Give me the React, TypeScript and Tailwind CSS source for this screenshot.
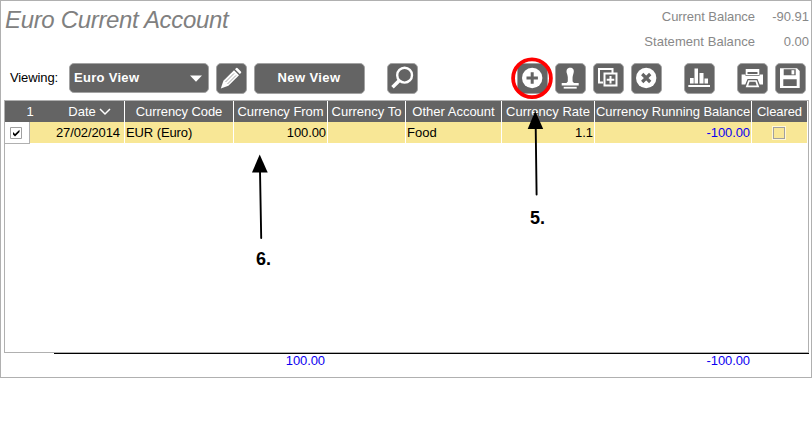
import type { ReactNode } from 'react';

const columns =
  'grid grid-cols-[50px_70px_109px_94px_78px_96px_93px_157px_55px]';

function Tool({ className = '', children }: { className?: string; children: ReactNode }) {
  return (
    <button
      className={`h-[31px] w-[31px] shrink-0 rounded-[5px] border border-[#a3a3a3] bg-[#646464] ${className}`}
    >
      <svg width="29" height="29" viewBox="1 1 29 29" fill="none">
        {children}
      </svg>
    </button>
  );
}

function Head({ children, last = false, className = '' }: { children: ReactNode; last?: boolean; className?: string }) {
  return (
    <div
      className={`flex items-center justify-center whitespace-nowrap ${last ? '' : 'border-r border-white'} ${className}`}
    >
      {children}
    </div>
  );
}

function Toolbar() {
  return (
    <div className="flex h-[31px] items-start">
      <span className="w-[59px] shrink-0 text-[13px] leading-[29px] tracking-[-0.1px] text-black">Viewing:</span>
      <button className="flex h-[30px] w-[140px] shrink-0 items-center justify-between rounded-[5px] border border-[#a3a3a3] bg-[#646464] pr-[6px] pl-1 text-[13px] font-bold tracking-[0.3px] text-white">
        <span>Euro View</span>
        <svg width="12" height="7" viewBox="0 0 12 7">
          <path d="M0 .5h12L6 6.7z" fill="#fff" />
        </svg>
      </button>
      <Tool className="ml-[7px]">
        <path d="M4.8 25.5l2.6-7.8L18 7.2l5 5L12.4 22.8z" fill="#fff" />
        <path d="M19 6.2l1.2-1.1q.7-.6 1.5.1l3.2 3.2q.8.8.1 1.5l-1.2 1.2z" fill="#fff" />
        <path d="M9.5 19l8.6-8.6M11.5 21l8.6-8.6" stroke="#8a8a8a" strokeWidth=".8" />
      </Tool>
      <button className="ml-[7px] h-[31px] w-[111px] shrink-0 rounded-[5px] border border-[#a3a3a3] bg-[#646464] pr-px pb-[2px] text-[13px] font-bold tracking-[0.4px] text-white">
        New View
      </button>
      <Tool className="ml-[22px]">
        <circle cx="17.6" cy="12.2" r="7.4" stroke="#fff" strokeWidth="2.4" />
        <path d="M12.3 17.5l-6.8 6.8" stroke="#fff" strokeWidth="3.6" />
      </Tool>
      <Tool className="ml-[99px]">
        <circle cx="15.2" cy="15" r="10.2" fill="#fff" />
        <path d="M15.2 9.3v11.4M9.5 15h11.4" stroke="#646464" strokeWidth="3" />
      </Tool>
      <Tool className="ml-[7px]">
        <path d="M12.8 18.5c0-3.200.3-4.700-.7-7.500C10.700 7.200 12 4.700 15.200 4.700s4.500 2.500 3.100 6.300c-1 2.800-.7 4.300-.7 7.500l1.400 1.500h4.700v2.500H6.700V20h4.700z" fill="#fff" />
        <path d="M8.700 24.700H21.700" stroke="#fff" strokeWidth="1.800" />
      </Tool>
      <Tool className="ml-[7px]">
        <path d="M10 19.5H6V6h13.5v4" stroke="#fff" strokeWidth="2" />
        <path d="M11.500 10.500H23.500V22.500H11.500z" stroke="#fff" strokeWidth="2" />
        <path d="M17.500 13v7.500M13.700 16.700h7.600" stroke="#fff" strokeWidth="2" />
      </Tool>
      <Tool className="ml-[7px]">
        <circle cx="15.200" cy="15" r="10.200" fill="#fff" />
        <path d="M11.200 11l8 8M19.200 11l-8 8" stroke="#646464" strokeWidth="3.200" />
      </Tool>
      <Tool className="ml-[22px]">
        <path d="M4.300 23H26" stroke="#fff" strokeWidth="2" />
        <path d="M6 15h3.700v5.500H6zM10.500 5.500H14v15h-3.500zM15.500 10h4v10.500h-4zM20.500 15.500H24v5h-3.500z" fill="#fff" />
      </Tool>
      <Tool className="ml-[22px]">
        <path d="M8.700 6h13.600v6H8.700z" fill="#fff" />
        <path d="M10.500 9h10v2h-10z" fill="#646464" />
        <path d="M4.600 11.500h3.800v1.300h14.200v-1.300H26v10h-3.300L20.500 16h-10l-2.200 5.500H4.600z" fill="#fff" />
        <path d="M11.300 17.200h8.400l2.600 7H8.700z" fill="#fff" />
        <path d="M12.500 18.700h6l1.200 3.800h-8.400z" fill="#646464" />
      </Tool>
      <Tool className="ml-[7px]">
        <path d="M5 5.300h17L24.700 8v17H5z" fill="#fff" />
        <path d="M8.700 6.300h12v6h-12zM8.300 16.200h13.400V23H8.300z" fill="#646464" />
        <path d="M16.500 7.200h2.800v4.200h-2.800z" fill="#fff" />
      </Tool>
    </div>
  );
}

function Ledger() {
  return (
    <div className="mt-[6px] ml-[3px] h-[253px] w-[805px] border border-[#b0b0b0] text-[13px]">
      <div className={`h-[21px] w-[802px] bg-[#646464] text-white ${columns}`}>
        <div className="flex items-center justify-center">1</div>
        <Head className="gap-[3px]">
          Date
          <svg width="12" height="8" viewBox="0 0 12 8">
            <path d="M1 1l5 5 5-5" fill="none" stroke="#fff" strokeWidth="1.500" />
          </svg>
        </Head>
        <Head className="tracking-[-0.080px]">Currency Code</Head>
        <Head className="tracking-[-0.050px]">Currency From</Head>
        <Head>Currency To</Head>
        <Head>Other Account</Head>
        <Head>Currency Rate</Head>
        <Head className="tracking-[-0.050px]">Currency Running Balance</Head>
        <Head last className="tracking-[-0.100px]">Cleared</Head>
      </div>
      <div className={`h-[21px] w-[802px] bg-[#f8e796] leading-[21px] text-black ${columns}`}>
        <div className="flex">
          <div className="flex h-[22px] w-[25px] items-center justify-center border-r border-b border-[#b0b0b0] bg-white pr-[2px]">
            <svg width="12" height="12" viewBox="0 0 12 12">
              <path d="M.5.5h11v11H.5z" fill="#fff" stroke="#a0a0a0" />
              <path d="M3 5v2.500L5 9.500l4.500-4.500V2.700L5 7z" fill="#000" />
            </svg>
          </div>
        </div>
        <div className="border-r border-white pr-1 text-right tracking-[-0.100px]">27/02/2014</div>
        <div className="border-r border-white pl-px tracking-[-0.100px]">EUR (Euro)</div>
        <div className="border-r border-white pr-px text-right tracking-[-0.100px]">100.00</div>
        <div className="border-r border-white" />
        <div className="border-r border-white pl-px">Food</div>
        <div className="border-r border-white pr-px text-right">1.1</div>
        <div className="border-r border-white pr-px text-right tracking-[-0.100px] text-[#0c00f0]">-100.00</div>
        <div className="flex items-center justify-center pr-px">
          <div className="h-3 w-3 border border-[#a0a0a0] bg-[#f8e796] outline outline-[#fff8d8]" />
        </div>
      </div>
    </div>
  );
}

function Annotations() {
  return (
    <>
      <svg className="pointer-events-none absolute top-0 left-0" width="812" height="436">
        <circle cx="532" cy="78.200" r="18.900" fill="none" stroke="#ff0000" strokeWidth="3.800" />
        <path d="M535.200 111l8 18h-15.500z" fill="#000" />
        <path d="M535.700 127L536.600 194.500" stroke="#000" strokeWidth="1.900" strokeLinecap="round" />
        <path d="M259.700 154.500l8 18H252z" fill="#000" />
        <path d="M260 171L261.200 238" stroke="#000" strokeWidth="1.900" strokeLinecap="round" />
      </svg>
      <span className="absolute top-[207px] left-[530px] text-[18px] leading-[22px] font-bold text-black">5.</span>
      <span className="absolute top-[248px] left-[256px] text-[18px] leading-[22px] font-bold text-black">6.</span>
    </>
  );
}

export default function App() {
  return (
    <main className="relative h-[436px] w-[812px] overflow-hidden bg-white font-['Liberation_Sans',Arial,sans-serif]">
      <section className="h-[378px] w-[812px] border border-[#b0b0b0]">
        <header className="flex h-[62px] justify-between">
          <h1 className="pt-[5px] pl-1 text-[24px] leading-[28px] tracking-[-0.330px] text-[#808080] italic">
            Euro Current Account
          </h1>
          <dl className="grid h-[50px] grid-cols-[112px_54px] gap-y-[5px] pt-[6px] pr-[2px] text-right text-[13px] leading-5 text-[#888]">
            <dt className="tracking-[-0.050px]">Current Balance</dt>
            <dd>-90.91</dd>
            <dt className="tracking-[0.050px]">Statement Balance</dt>
            <dd>0.00</dd>
          </dl>
        </header>
        <div className="pl-[9px]">
          <Toolbar />
        </div>
        <Ledger />
        <footer className="ml-[53px] flex h-5 w-[755px] border-t border-black text-[13px] leading-[14px] tracking-[-0.100px] text-[#0c00f0]">
          <span className="w-[271px] text-right">100.00</span>
          <span className="w-[425px] text-right">-100.00</span>
        </footer>
      </section>
      <Annotations />
    </main>
  );
}
